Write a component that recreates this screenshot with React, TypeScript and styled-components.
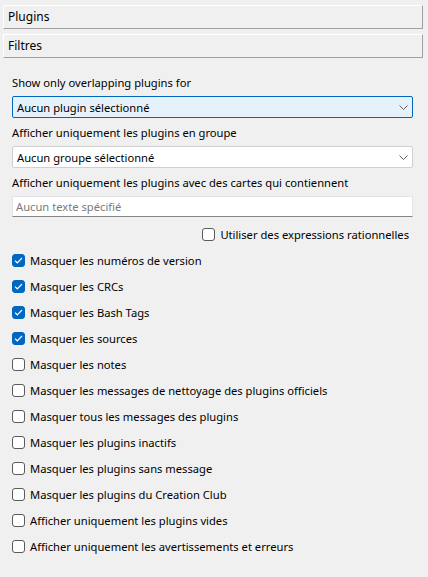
import styled, { createGlobalStyle } from "styled-components";

const GlobalStyle = createGlobalStyle`
  html, body {
    margin: 0;
    padding: 0;
    background: #f0f0f0;
  }
  body {
    font-family: "Noto Sans", "Open Sans", sans-serif;
    font-size: 11.2px;
    color: #000;
  }
`;

const checks = [
  { label: "Masquer les numéros de version", checked: true },
  { label: "Masquer les CRCs", checked: true },
  { label: "Masquer les Bash Tags", checked: true },
  { label: "Masquer les sources", checked: true },
  { label: "Masquer les notes", checked: false },
  { label: "Masquer les messages de nettoyage des plugins officiels", checked: false },
  { label: "Masquer tous les messages des plugins", checked: false },
  { label: "Masquer les plugins inactifs", checked: false },
  { label: "Masquer les plugins sans message", checked: false },
  { label: "Masquer les plugins du Creation Club", checked: false },
  { label: "Afficher uniquement les plugins vides", checked: false },
  { label: "Afficher uniquement les avertissements et erreurs", checked: false },
];

const Chevron = () => (
  <svg width="9" height="5" viewBox="0 0 9 5">
    <path d="M0.5 0.5 L4.5 4.5 L8.5 0.5" fill="none" stroke="#606060" strokeWidth="1" />
  </svg>
);

const Check = ({ checked }: { checked: boolean }) => (
  <Box $checked={checked}>
    {checked ? (
      <svg width="9" height="7" viewBox="0 0 9 7">
        <path d="M1 3.6 L3.3 5.8 L8 1" fill="none" stroke="#fff" strokeWidth="1.2" />
      </svg>
    ) : null}
  </Box>
);

export default function App() {
  return (
    <>
      <GlobalStyle />
      <Page>
        <SectionHeader>Plugins</SectionHeader>
        <SectionHeader>Filtres</SectionHeader>
        <Filters>
          <Field>
            <Label>Show only overlapping plugins for</Label>
            <Combo $focused>
              <span>Aucun plugin sélectionné</span>
              <Chevron />
            </Combo>
          </Field>
          <Field>
            <Label>Afficher uniquement les plugins en groupe</Label>
            <Combo>
              <span>Aucun groupe sélectionné</span>
              <Chevron />
            </Combo>
          </Field>
          <Field>
            <Label>Afficher uniquement les plugins avec des cartes qui contiennent</Label>
            <TextInput placeholder="Aucun texte spécifié" />
          </Field>
          <RegexRow>
            <CheckRow as="div">
              <Check checked={false} />
              <span>Utiliser des expressions rationnelles</span>
            </CheckRow>
          </RegexRow>
          <CheckList>
            {checks.map((c) => (
              <CheckRow key={c.label}>
                <Check checked={c.checked} />
                <span>{c.label}</span>
              </CheckRow>
            ))}
          </CheckList>
        </Filters>
      </Page>
    </>
  );
}

const Page = styled.div`
  padding: 5px 5px 0 3px;
  display: flex;
  flex-direction: column;
  gap: 5px;
`;

const SectionHeader = styled.div`
  height: 22px;
  box-sizing: content-box;
  border-top: 1px solid #fff;
  border-left: 1px solid #fff;
  border-right: 1px solid #a0a0a0;
  border-bottom: 1px solid #a0a0a0;
  padding-left: 4px;
  display: flex;
  align-items: center;
  line-height: 16px;
  font-size: 12px;
`;

const Filters = styled.div`
  padding: 11px 10px 0 9px;
  display: flex;
  flex-direction: column;
`;

const Field = styled.div`
  display: flex;
  flex-direction: column;
  gap: 6px;
  margin-bottom: 6px;
`;

const Label = styled.div`
  line-height: 18px;
  height: 16px;
  white-space: nowrap;
`;

const Combo = styled.div<{ $focused?: boolean }>`
  height: 22px;
  box-sizing: border-box;
  border: 1px solid ${(p) => (p.$focused ? "#0067c0" : "#d0d0d0")};
  border-radius: 2px;
  background: ${(p) => (p.$focused ? "#e5f1fb" : "#fff")};
  display: flex;
  align-items: center;
  justify-content: space-between;
  padding: 0 4px 0 4px;
`;

const TextInput = styled.input`
  height: 21px;
  box-sizing: border-box;
  border: 1px solid #e3e3e3;
  border-bottom-color: #868686;
  background: #fff;
  padding: 0 3px;
  font: inherit;
  outline: none;
  &::placeholder {
    color: #7a7a7a;
  }
`;

const RegexRow = styled.div`
  display: flex;
  justify-content: flex-end;
  padding-right: 4px;
  & > div {
    height: 22px;
  }
`;

const CheckList = styled.div`
  display: flex;
  flex-direction: column;
  margin-top: 2px;
`;

const CheckRow = styled.label`
  height: 26px;
  display: flex;
  align-items: center;
  gap: 5px;
  white-space: nowrap;
`;

const Box = styled.span<{ $checked: boolean }>`
  width: 13px;
  height: 13px;
  box-sizing: border-box;
  border-radius: 3px;
  border: 1px solid ${(p) => (p.$checked ? "#0067c0" : "#5a5a5a")};
  background: ${(p) => (p.$checked ? "#0067c0" : "#fff")};
  display: flex;
  align-items: center;
  justify-content: center;
  flex-shrink: 0;
`;
